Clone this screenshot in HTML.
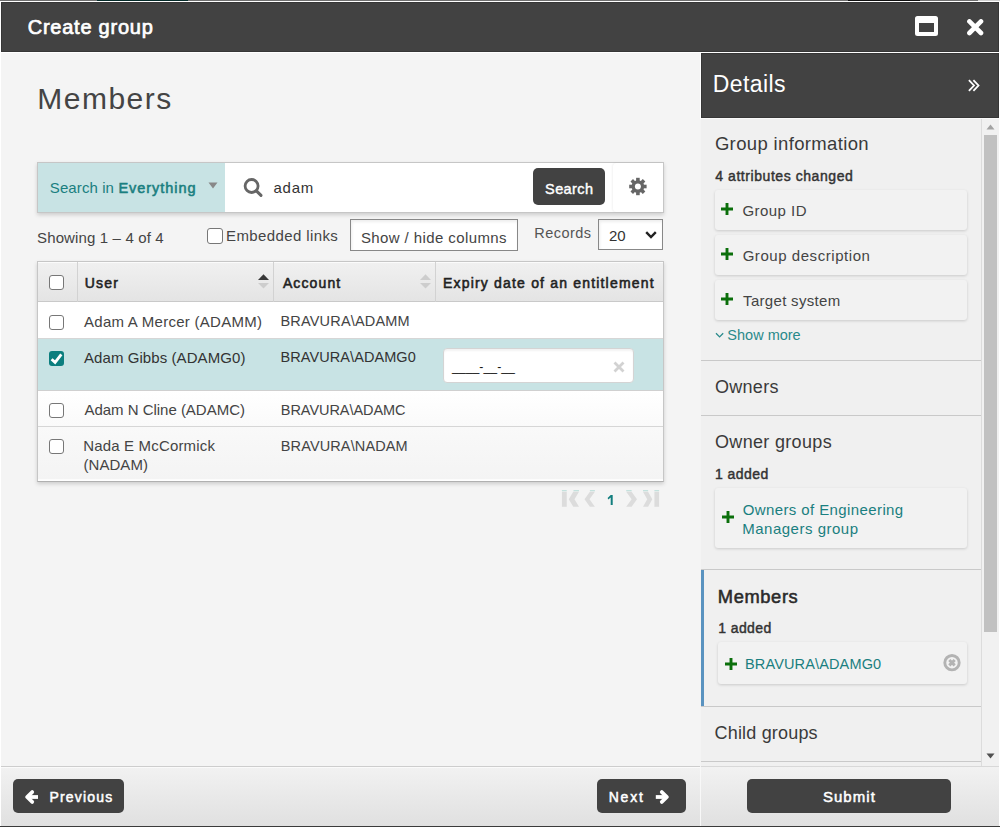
<!DOCTYPE html>
<html><head><meta charset="utf-8"><style>
html,body{margin:0;padding:0;width:1000px;height:827px;overflow:hidden;background:#fff}
body>div,body>svg{position:absolute}
.t{white-space:nowrap;font-family:"Liberation Sans",sans-serif}
b{font-weight:700}
</style></head><body>
<div style="left:0px;top:0px;width:1000px;height:1px;background:#6f6f6f"></div>
<div style="left:97px;top:0px;width:91px;height:1px;background:#052b29"></div>
<div style="left:848px;top:0px;width:72px;height:1px;background:#111"></div>
<div style="left:978px;top:0px;width:22px;height:1px;background:#cfcfcf"></div>
<div style="left:0px;top:1px;width:1000px;height:826px;background:#fff"></div>
<div style="left:1px;top:53px;width:998px;height:773px;background:#f4f4f4"></div>
<div style="left:1px;top:2px;width:998px;height:50px;background:#424242;border:1px solid #363636;box-sizing:border-box"></div>
<div class="t" style="left:27.75px;top:16.57px;font-size:20px;line-height:20px;color:#fff;-webkit-text-stroke:0.7px #fff;letter-spacing:0.755px;">Create group</div>
<div style="left:915px;top:16px;width:23px;height:20px;border:4px solid #fff;border-top-width:7px;border-radius:2.5px;box-sizing:border-box"></div>
<svg style="left:967px;top:19px" width="17" height="17" viewBox="0 0 17 17"><path d="M2.4 2.4 L14 14 M14 2.4 L2.4 14" stroke="#fff" stroke-width="4.6" stroke-linecap="round"/></svg>
<div style="left:1px;top:53px;width:699px;height:713px;background:#f4f4f4"></div>
<div class="t" style="left:37.3px;top:84.1px;font-size:30px;line-height:30px;color:#444;letter-spacing:1.475px;">Members</div>
<div style="left:37px;top:162px;width:627px;height:51px;background:#fff;border:1px solid #c6c6c6;box-sizing:border-box;box-shadow:0 2px 4px rgba(0,0,0,0.16)"></div>
<div style="left:38px;top:163px;width:187px;height:49px;background:#c8e3e4"></div>
<div class="t" style="left:49.82px;top:180.3px;font-size:15px;line-height:15px;color:#1a7f80;letter-spacing:0.097px;">Search in</div>
<div class="t" style="left:118.42px;top:180.72px;font-size:14.5px;line-height:14.5px;color:#1a7f80;-webkit-text-stroke:0.55px #1a7f80;letter-spacing:0.971px;">Everything</div>
<svg style="left:208px;top:182px" width="10" height="7" viewBox="0 0 10 7"><path d="M0.5 0.5 L9.5 0.5 L5 6.5Z" fill="#888"/></svg>
<svg style="left:243px;top:177px" width="21" height="21" viewBox="0 0 21 21"><circle cx="8.6" cy="9" r="6.5" fill="none" stroke="#666" stroke-width="2.8"/><path d="M13.4 13.8 L18 18.3" stroke="#666" stroke-width="3.1" stroke-linecap="round"/></svg>
<div class="t" style="left:273.4px;top:180.2px;font-size:15px;line-height:15px;color:#333;letter-spacing:0.800px;">adam</div>
<div style="left:533px;top:168px;width:72px;height:37px;background:#424242;border-radius:5px"></div>
<div class="t" style="left:545.05px;top:182.02px;font-size:14.5px;line-height:14.5px;color:#fff;-webkit-text-stroke:0.4px #fff;letter-spacing:0.420px;">Search</div>
<div style="left:613px;top:163px;width:50px;height:49px;background:#fff;border-radius:4px 0 0 4px;box-shadow:-1px 0 2px rgba(0,0,0,0.05)"></div>
<svg style="left:626px;top:175px" width="24" height="24" viewBox="-11.9 -11.5 24 24"><g fill="#666"><circle r="6.3"/><rect x="-1.8" y="-8.7" width="3.6" height="4" transform="rotate(0)"/><rect x="-1.8" y="-8.7" width="3.6" height="4" transform="rotate(45)"/><rect x="-1.8" y="-8.7" width="3.6" height="4" transform="rotate(90)"/><rect x="-1.8" y="-8.7" width="3.6" height="4" transform="rotate(135)"/><rect x="-1.8" y="-8.7" width="3.6" height="4" transform="rotate(180)"/><rect x="-1.8" y="-8.7" width="3.6" height="4" transform="rotate(225)"/><rect x="-1.8" y="-8.7" width="3.6" height="4" transform="rotate(270)"/><rect x="-1.8" y="-8.7" width="3.6" height="4" transform="rotate(315)"/></g><circle r="3" fill="#fff"/></svg>
<div class="t" style="left:37.03px;top:229.5px;font-size:15px;line-height:15px;color:#444;letter-spacing:0.138px;">Showing 1 – 4 of 4</div>
<div style="left:207px;top:228px;width:16px;height:16px;border:1.5px solid #777;border-radius:3px;background:#fff;box-sizing:border-box"></div>
<div class="t" style="left:226.0px;top:228.2px;font-size:15px;line-height:15px;color:#444;letter-spacing:0.392px;">Embedded links</div>
<div style="left:350px;top:219px;width:168px;height:32px;border:1px solid #888;background:#fff;box-sizing:border-box;box-shadow:inset 1px 2px 3px rgba(0,0,0,0.07)"></div>
<div class="t" style="left:360.92px;top:229.7px;font-size:15px;line-height:15px;color:#444;letter-spacing:0.401px;">Show / hide columns</div>
<div class="t" style="left:534.24px;top:225.62px;font-size:14.5px;line-height:14.5px;color:#555;letter-spacing:0.459px;">Records</div>
<div style="left:598px;top:219px;width:65px;height:31px;border:1px solid #888;background:#fff;box-sizing:border-box;box-shadow:inset 1px 2px 3px rgba(0,0,0,0.07)"></div>
<div class="t" style="left:609px;top:227.7px;font-size:15px;line-height:15px;color:#333">20</div>
<svg style="left:645px;top:231px" width="12" height="8" viewBox="0 0 12 8"><path d="M1.2 1.2 L6 6 L10.8 1.2" fill="none" stroke="#222" stroke-width="2.4"/></svg>
<div style="left:37px;top:261px;width:627px;height:221px;background:#fff;border:1px solid #c6c6c6;border-bottom-color:#b0b0b0;box-sizing:border-box;box-shadow:0 2px 4px rgba(0,0,0,0.16)"></div>
<div style="left:38px;top:262px;width:625px;height:40px;background:linear-gradient(#f0f0f0,#e4e4e4);border-top:1px solid #fbfbfb;border-bottom:1px solid #c9c9c9;box-sizing:border-box"></div>
<div style="left:77px;top:262px;width:1px;height:40px;background:#d2d2d2"></div>
<div style="left:273px;top:262px;width:1px;height:40px;background:#d2d2d2"></div>
<div style="left:435px;top:262px;width:1px;height:40px;background:#d2d2d2"></div>
<div style="left:49px;top:275px;width:15px;height:15px;border:1.5px solid #777;border-radius:3px;background:#fff;box-sizing:border-box"></div>
<div class="t" style="left:84.72px;top:275.95px;font-size:14px;line-height:14px;color:#222;-webkit-text-stroke:0.55px #222;letter-spacing:1.223px;">User</div>
<div class="t" style="left:282.88px;top:275.95px;font-size:14px;line-height:14px;color:#222;-webkit-text-stroke:0.55px #222;letter-spacing:1.130px;">Account</div>
<div class="t" style="left:443.05px;top:275.95px;font-size:14px;line-height:14px;color:#222;-webkit-text-stroke:0.55px #222;letter-spacing:1.181px;">Expiry date of an entitlement</div>
<svg style="left:258px;top:274px" width="11" height="15" viewBox="0 0 11 15"><path d="M0 6 L5.5 0.2 L11 6Z" fill="#383838"/><path d="M0 9 L11 9 L5.5 14.6Z" fill="#cdcdcd"/></svg>
<svg style="left:419.5px;top:274px" width="11" height="15" viewBox="0 0 11 15"><path d="M0 6 L5.5 0.2 L11 6Z" fill="#cdcdcd"/><path d="M0 9 L11 9 L5.5 14.6Z" fill="#cdcdcd"/></svg>
<div style="left:38px;top:302px;width:625px;height:36px;background:#fff"></div>
<div style="left:38px;top:338px;width:625px;height:1px;background:#d6d6d6"></div>
<div style="left:38px;top:339px;width:625px;height:51px;background:#c8e3e4"></div>
<div style="left:38px;top:390px;width:625px;height:1px;background:#d0d0d0"></div>
<div style="left:38px;top:391px;width:625px;height:35px;background:linear-gradient(#fff,#fafafa)"></div>
<div style="left:38px;top:426px;width:625px;height:1px;background:#d6d6d6"></div>
<div style="left:38px;top:427px;width:625px;height:53px;background:linear-gradient(#f9f9f9,#f4f4f4);border-bottom:1px solid #fcfcfc;box-sizing:border-box"></div>
<div style="left:49px;top:315px;width:15px;height:15px;border:1.5px solid #777;border-radius:3px;background:#fff;box-sizing:border-box"></div>
<div class="t" style="left:84.0px;top:313.9px;font-size:15px;line-height:15px;color:#444;letter-spacing:0.270px;">Adam A Mercer (ADAMM)</div>
<div class="t" style="left:280.54px;top:314.42px;font-size:14.5px;line-height:14.5px;color:#444;letter-spacing:0.167px;">BRAVURA\ADAMM</div>
<div style="left:49px;top:351px;width:15px;height:15px;background:#0b7e7e;border-radius:3px"></div>
<svg style="left:49px;top:351px" width="15" height="15" viewBox="0 0 15 15"><path d="M2.6 8.2 L6.1 11.4 L12.3 3.4" fill="none" stroke="#fff" stroke-width="2.8"/></svg>
<div class="t" style="left:84.0px;top:349.9px;font-size:15px;line-height:15px;color:#333;letter-spacing:0.074px;">Adam Gibbs (ADAMG0)</div>
<div class="t" style="left:280.54px;top:350.32px;font-size:14.5px;line-height:14.5px;color:#333;letter-spacing:0.069px;">BRAVURA\ADAMG0</div>
<div style="left:443px;top:348px;width:191px;height:35px;background:#fff;border:1px solid #d4d4d4;border-radius:4px;box-sizing:border-box;box-shadow:inset 0 2px 2px rgba(0,0,0,0.05)"></div>
<div class="t" style="left:452px;top:361.09px;font-size:12.3px;line-height:12.3px;color:#111">____-__-__</div>
<svg style="left:613px;top:361px" width="12" height="12" viewBox="0 0 12 12"><path d="M1.5 1.5 L10.5 10.5 M10.5 1.5 L1.5 10.5" stroke="#d2d2d2" stroke-width="2.8"/></svg>
<div style="left:49px;top:403px;width:15px;height:15px;border:1.5px solid #777;border-radius:3px;background:#fff;box-sizing:border-box"></div>
<div class="t" style="left:84.4px;top:402.3px;font-size:15px;line-height:15px;color:#444;letter-spacing:-0.016px;">Adam N Cline (ADAMC)</div>
<div class="t" style="left:280.84px;top:402.52px;font-size:14.5px;line-height:14.5px;color:#444;letter-spacing:-0.063px;">BRAVURA\ADAMC</div>
<div style="left:49px;top:439px;width:15px;height:15px;border:1.5px solid #777;border-radius:3px;background:#fff;box-sizing:border-box"></div>
<div class="t" style="left:83.2px;top:437.9px;font-size:15px;line-height:15px;color:#444;letter-spacing:0.172px;">Nada E McCormick</div>
<div class="t" style="left:83.5px;top:457.1px;font-size:15px;line-height:15px;color:#444;letter-spacing:0.046px;">(NADAM)</div>
<div class="t" style="left:280.84px;top:438.52px;font-size:14.5px;line-height:14.5px;color:#444;letter-spacing:0.114px;">BRAVURA\NADAM</div>
<svg style="left:556px;top:484px" width="110" height="28" viewBox="0 0 110 28"><g fill="#dcdcdc"><polygon points="17.25,7.80 23.00,7.80 18.50,15.30 23.00,22.80 17.25,22.80 12.75,15.30"/><polygon points="33.90,7.80 38.90,7.80 33.50,15.30 38.90,22.80 33.90,22.80 28.50,15.30"/><polygon points="75.60,7.80 70.20,7.80 75.60,15.30 70.20,22.80 75.60,22.80 81.00,15.30"/><polygon points="92.10,7.80 87.00,7.80 91.20,15.30 87.00,22.80 92.10,22.80 96.30,15.30"/><rect x="5.899999999999977" y="7.800000000000011" width="4.85" height="15"/><rect x="98.39999999999998" y="7.800000000000011" width="4.7" height="15"/></g><g fill="#b9dcd8"><rect x="5.90" y="6.2" width="4.85" height="1"/><rect x="17.50" y="6.2" width="5.50" height="1"/><rect x="33.90" y="6.2" width="5.00" height="1"/><rect x="70.20" y="6.2" width="5.40" height="1"/><rect x="87.00" y="6.2" width="5.10" height="1"/><rect x="98.40" y="6.2" width="4.70" height="1"/></g></svg>
<svg style="left:600px;top:490px" width="20" height="20" viewBox="600 490 20 20"><path d="M610.7 495.1 L612.7 495.1 L612.7 505 L610.7 505 L610.7 497.6 L608.3 499.4 L607.6 498.1 Z" fill="#127e7e"/></svg>
<div style="left:1px;top:766px;width:699px;height:60px;background:linear-gradient(#f2f2f2,#e0e0e0)"></div>
<div style="left:1px;top:766px;width:699px;height:1px;background:#cdcdcd"></div>
<div style="left:1px;top:767px;width:699px;height:1px;background:#fafafa"></div>
<div style="left:13px;top:779px;width:111px;height:34px;background:#424242;border-radius:5px"></div>
<svg style="left:24px;top:789px" width="16" height="16" viewBox="0 0 16 16"><path d="M8.2 3.1 L3.1 8 L8.2 12.9" fill="none" stroke="#fff" stroke-width="3.8" stroke-linecap="round" stroke-linejoin="round"/><path d="M4 8 H14" stroke="#fff" stroke-width="3.8"/></svg>
<div class="t" style="left:49.53px;top:790.15px;font-size:14px;line-height:14px;color:#fff;-webkit-text-stroke:0.5px #fff;letter-spacing:1.179px;">Previous</div>
<div style="left:597px;top:779px;width:89px;height:34px;background:#424242;border-radius:5px"></div>
<div class="t" style="left:608.73px;top:790.15px;font-size:14px;line-height:14px;color:#fff;-webkit-text-stroke:0.5px #fff;letter-spacing:1.773px;">Next</div>
<svg style="left:654px;top:789px" width="16" height="16" viewBox="0 0 16 16"><path d="M7.8 3.1 L12.9 8 L7.8 12.9" fill="none" stroke="#fff" stroke-width="3.8" stroke-linecap="round" stroke-linejoin="round"/><path d="M12 8 H1.8" stroke="#fff" stroke-width="3.8"/></svg>
<div style="left:0px;top:826px;width:1000px;height:1px;background:#3a3a3a"></div>
<div style="left:700px;top:53px;width:1px;height:66px;background:#fff"></div>
<div style="left:701px;top:118px;width:298px;height:1px;background:#f9f9f9"></div>
<div style="left:701px;top:53px;width:298px;height:65px;background:#424242;border:1px solid #363636;box-sizing:border-box"></div>
<div class="t" style="left:712.86px;top:72.93px;font-size:23px;line-height:23px;color:#fff;letter-spacing:0.380px;">Details</div>
<svg style="left:967px;top:79px" width="14" height="13" viewBox="0 0 14 13"><path d="M1.9 1.2 L7 6.5 L1.9 11.8 M6.4 1.2 L11.5 6.5 L6.4 11.8" fill="none" stroke="#fff" stroke-width="1.8"/></svg>
<div style="left:701px;top:119px;width:298px;height:647px;background:#f0f0f0"></div>
<div style="left:981px;top:119px;width:1px;height:647px;background:#dcdcdc"></div>
<div style="left:982px;top:119px;width:17px;height:647px;background:#f1f1f1"></div>
<svg style="left:986px;top:124px" width="9" height="6" viewBox="0 0 9 6"><path d="M0.5 5.5 L4.5 0.5 L8.5 5.5Z" fill="#a3a3a3"/></svg>
<div style="left:984px;top:135px;width:13px;height:497px;background:#c1c1c1"></div>
<svg style="left:986px;top:753px" width="9" height="6" viewBox="0 0 9 6"><path d="M0.5 0.5 L8.5 0.5 L4.5 5.5Z" fill="#505050"/></svg>
<div class="t" style="left:714.88px;top:135.34px;font-size:18.5px;line-height:18.5px;color:#3a3a3a;letter-spacing:0.352px;">Group information</div>
<div class="t" style="left:715.24px;top:168.95px;font-size:14px;line-height:14px;color:#333;-webkit-text-stroke:0.45px #333;letter-spacing:0.563px;">4 attributes changed</div>
<div style="left:715px;top:190px;width:252px;height:40px;background:#f2f2f2;border-radius:3px;box-shadow:0 1px 3px rgba(0,0,0,0.16)"></div>
<svg style="left:721px;top:203px" width="12" height="12" viewBox="0 0 12 12"><path d="M6 0 V12 M0 6 H12" stroke="#0b6f0b" stroke-width="2.9"/></svg>
<div class="t" style="left:742.45px;top:202.7px;font-size:15px;line-height:15px;color:#444;letter-spacing:0.457px;">Group ID</div>
<div style="left:715px;top:235px;width:252px;height:40px;background:#f2f2f2;border-radius:3px;box-shadow:0 1px 3px rgba(0,0,0,0.16)"></div>
<svg style="left:721px;top:248px" width="12" height="12" viewBox="0 0 12 12"><path d="M6 0 V12 M0 6 H12" stroke="#0b6f0b" stroke-width="2.9"/></svg>
<div class="t" style="left:742.65px;top:247.7px;font-size:15px;line-height:15px;color:#444;letter-spacing:0.555px;">Group description</div>
<div style="left:715px;top:280px;width:252px;height:40px;background:#f2f2f2;border-radius:3px;box-shadow:0 1px 3px rgba(0,0,0,0.16)"></div>
<svg style="left:721px;top:293px" width="12" height="12" viewBox="0 0 12 12"><path d="M6 0 V12 M0 6 H12" stroke="#0b6f0b" stroke-width="2.9"/></svg>
<div class="t" style="left:743.1px;top:292.7px;font-size:15px;line-height:15px;color:#444;letter-spacing:0.308px;">Target system</div>
<svg style="left:715px;top:331px" width="10" height="8" viewBox="0 0 10 8"><path d="M1 2.2 L4.6 5.9 L8.2 2.2" fill="none" stroke="#2a8a8b" stroke-width="1.3"/></svg>
<div class="t" style="left:727.35px;top:327.52px;font-size:14.5px;line-height:14.5px;color:#2a8a8b;letter-spacing:0.001px;">Show more</div>
<div style="left:701px;top:360px;width:280px;height:1px;background:#c9c9c9"></div>
<div class="t" style="left:714.99px;top:378.46px;font-size:18px;line-height:18px;color:#3a3a3a;letter-spacing:0.286px;">Owners</div>
<div style="left:701px;top:415px;width:280px;height:1px;background:#c9c9c9"></div>
<div class="t" style="left:714.99px;top:433.36px;font-size:18px;line-height:18px;color:#3a3a3a;letter-spacing:0.327px;">Owner groups</div>
<div class="t" style="left:714.98px;top:466.95px;font-size:14px;line-height:14px;color:#333;-webkit-text-stroke:0.45px #333;letter-spacing:0.433px;">1 added</div>
<div style="left:715px;top:488px;width:252px;height:60px;background:#f2f2f2;border-radius:3px;box-shadow:0 1px 3px rgba(0,0,0,0.16)"></div>
<svg style="left:722px;top:511px" width="12" height="12" viewBox="0 0 12 12"><path d="M6 0 V12 M0 6 H12" stroke="#0b6f0b" stroke-width="2.9"/></svg>
<div class="t" style="left:742.72px;top:501.5px;font-size:15px;line-height:15px;color:#1a7f80;letter-spacing:0.395px;">Owners of Engineering</div>
<div class="t" style="left:742.2px;top:521.1px;font-size:15px;line-height:15px;color:#1a7f80;letter-spacing:0.508px;">Managers group</div>
<div style="left:701px;top:569px;width:280px;height:1px;background:#c9c9c9"></div>
<div style="left:701px;top:570px;width:3px;height:137px;background:#5a93c0"></div>
<div class="t" style="left:717.81px;top:587.71px;font-size:18.3px;line-height:18.3px;color:#2a2a2a;-webkit-text-stroke:0.55px #2a2a2a;letter-spacing:0.624px;">Members</div>
<div class="t" style="left:718.18px;top:621.15px;font-size:14px;line-height:14px;color:#333;-webkit-text-stroke:0.45px #333;letter-spacing:0.417px;">1 added</div>
<div style="left:718px;top:642px;width:249px;height:42px;background:#f2f2f2;border-radius:3px;box-shadow:0 1px 3px rgba(0,0,0,0.16)"></div>
<svg style="left:725px;top:657.5px" width="12" height="12" viewBox="0 0 12 12"><path d="M6 0 V12 M0 6 H12" stroke="#0b6f0b" stroke-width="2.9"/></svg>
<div class="t" style="left:745.04px;top:657.12px;font-size:14.5px;line-height:14.5px;color:#1a7f80;letter-spacing:0.138px;">BRAVURA\ADAMG0</div>
<svg style="left:943px;top:654px" width="18" height="18" viewBox="0 0 18 18"><circle cx="9" cy="8.7" r="7.2" fill="none" stroke="#b3b3b3" stroke-width="2.9"/><path d="M6.3 6 L11.7 11.4 M11.7 6 L6.3 11.4" stroke="#b3b3b3" stroke-width="3"/></svg>
<div style="left:701px;top:706px;width:280px;height:1px;background:#c9c9c9"></div>
<div class="t" style="left:714.5px;top:724.16px;font-size:18px;line-height:18px;color:#3a3a3a;letter-spacing:0.187px;">Child groups</div>
<div style="left:701px;top:761px;width:280px;height:1px;background:#c9c9c9"></div>
<div style="left:701px;top:766px;width:298px;height:60px;background:linear-gradient(#f2f2f2,#e0e0e0)"></div>
<div style="left:701px;top:766px;width:298px;height:1px;background:#d8d8d8"></div>
<div style="left:700px;top:767px;width:1px;height:59px;background:#f8f8f8"></div>
<div style="left:747px;top:779px;width:204px;height:34px;background:#424242;border-radius:5px"></div>
<div class="t" style="left:822.88px;top:789.3px;font-size:15px;line-height:15px;color:#fff;-webkit-text-stroke:0.5px #fff;letter-spacing:1.060px;">Submit</div>
</body></html>
